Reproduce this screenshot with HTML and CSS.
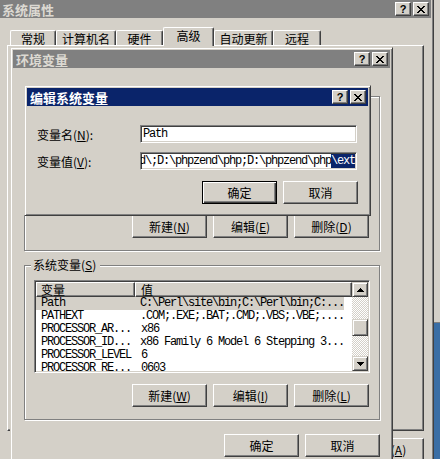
FILE: index.html
```html
<!DOCTYPE html>
<html lang="zh-CN">
<head>
    <meta charset="UTF-8">
    <meta name="viewport" content="width=device-width, initial-scale=1.0">
    <title>编辑系统变量</title>
    <link rel="stylesheet" href="styles.css">
</head>
<body>
<div class="desktop">
    <div class="desk-blue"></div>

    <!-- 系统属性 -->
    <div class="window win-sys">
        <div class="caption">
            <span>系统属性</span>
            <span class="caption-btns">
                <span class="cap-btn">?</span>
                <span class="cap-btn"><svg width="8" height="7" viewBox="0 0 8 7"><path d="M0 0h2v1H0zM6 0h2v1H6zM1 1h2v1H1zM5 1h2v1H5zM2 2h4v1H2zM3 3h2v1H3zM2 4h4v1H2zM1 5h2v1H1zM5 5h2v1H5zM0 6h2v1H0zM6 6h2v1H6z"/></svg></span>
            </span>
        </div>
        <div class="tabs">
            <span class="tab tab-general">常规</span>
            <span class="tab tab-computer">计算机名</span>
            <span class="tab tab-hardware">硬件</span>
            <span class="tab tab-advanced tab-active">高级</span>
            <span class="tab tab-update">自动更新</span>
            <span class="tab tab-remote">远程</span>
        </div>
        <div class="tab-panel"></div>
        <div class="button-row sys-buttons">
            <button type="button" class="btn">应用(<u>A</u>)</button>
        </div>
    </div>

    <!-- 环境变量 -->
    <div class="window win-env">
        <div class="caption">
            <span>环境变量</span>
            <span class="caption-btns">
                <span class="cap-btn">?</span>
                <span class="cap-btn"><svg width="8" height="7" viewBox="0 0 8 7"><path d="M0 0h2v1H0zM6 0h2v1H6zM1 1h2v1H1zM5 1h2v1H5zM2 2h4v1H2zM3 3h2v1H3zM2 4h4v1H2zM1 5h2v1H1zM5 5h2v1H5zM0 6h2v1H0zM6 6h2v1H6z"/></svg></span>
            </span>
        </div>
        <div class="env-body">
            <!-- user variables: covered by the edit dialog -->
            <div class="groupbox group-user">
                <span class="group-label group-label-empty"></span>
                <div class="listview"></div>
                <div class="button-row group-buttons">
                    <button type="button" class="btn">新建(<u>N</u>)</button>
                    <button type="button" class="btn">编辑(<u>E</u>)</button>
                    <button type="button" class="btn">删除(<u>D</u>)</button>
                </div>
            </div>

            <div class="groupbox group-system">
                <span class="group-label">系统变量(<u>S</u>)</span>
                <div class="listview">
                    <div class="lv-body">
                        <div class="lv-header">
                            <span class="lv-head lv-head-name">变量</span>
                            <span class="lv-head lv-head-value">值</span>
                        </div>
                        <div class="lv-row selected"><span class="lv-name">Path</span><span class="lv-value">C:\Perl\site\bin;C:\Perl\bin;C:...</span></div>
                        <div class="lv-row"><span class="lv-name">PATHEXT</span><span class="lv-value">.COM;.EXE;.BAT;.CMD;.VBS;.VBE;....</span></div>
                        <div class="lv-row"><span class="lv-name">PROCESSOR_AR...</span><span class="lv-value">x86</span></div>
                        <div class="lv-row"><span class="lv-name">PROCESSOR_ID...</span><span class="lv-value">x86 Family 6 Model 6 Stepping 3...</span></div>
                        <div class="lv-row"><span class="lv-name">PROCESSOR_LEVEL</span><span class="lv-value">6</span></div>
                        <div class="lv-row"><span class="lv-name">PROCESSOR_RE...</span><span class="lv-value">0603</span></div>
                    </div>
                    <div class="scrollbar">
                        <span class="sb-btn"><svg width="7" height="4" viewBox="0 0 7 4"><path d="M3 0h1v1h1v1h1v1h1v1H0V3h1V2h1V1h1z"/></svg></span>
                        <span class="sb-track"><span class="sb-thumb"></span></span>
                        <span class="sb-btn"><svg width="7" height="4" viewBox="0 0 7 4"><path d="M0 0h7v1H6v1H5v1H4v1H3V3H2V2H1V1H0z"/></svg></span>
                    </div>
                </div>
                <div class="button-row group-buttons">
                    <button type="button" class="btn">新建(<u>W</u>)</button>
                    <button type="button" class="btn">编辑(<u>I</u>)</button>
                    <button type="button" class="btn">删除(<u>L</u>)</button>
                </div>
            </div>

            <div class="button-row env-buttons">
                <button type="button" class="btn">确定</button>
                <button type="button" class="btn">取消</button>
            </div>
        </div>
    </div>

    <!-- 编辑系统变量 -->
    <div class="window win-edit">
        <div class="caption active">
            <span>编辑系统变量</span>
            <span class="caption-btns">
                <span class="cap-btn">?</span>
                <span class="cap-btn"><svg width="8" height="7" viewBox="0 0 8 7"><path d="M0 0h2v1H0zM6 0h2v1H6zM1 1h2v1H1zM5 1h2v1H5zM2 2h4v1H2zM3 3h2v1H3zM2 4h4v1H2zM1 5h2v1H1zM5 5h2v1H5zM0 6h2v1H0zM6 6h2v1H6z"/></svg></span>
            </span>
        </div>
        <div class="edit-body">
            <div class="field">
                <span class="field-label">变量名(<u>N</u>):</span>
                <span class="textbox"><span class="textbox-text">Path</span></span>
            </div>
            <div class="field">
                <span class="field-label">变量值(<u>V</u>):</span>
                <span class="textbox textbox-end"><span class="textbox-text">d\;D:\phpzend\php;D:\phpzend\php<span class="sel">\ext</span></span></span>
            </div>
            <div class="button-row edit-buttons">
                <button type="button" class="btn btn-default">确定</button>
                <button type="button" class="btn">取消</button>
            </div>
        </div>
    </div>
</div>
</body>
</html>
```

FILE: styles.css
```css
* {
    box-sizing: border-box;
}
body {
    margin: 0;
    font-family: "Noto Sans CJK SC", "Liberation Sans", sans-serif;
    font-size: 12px;
    color: #000;
    background-color: #d4d0c8;
}
.desktop {
    position: relative;
    width: 440px;
    height: 459px;
    overflow: hidden;
}
.desk-blue {
    position: absolute;
    left: 434px;
    top: 322px;
    width: 10px;
    height: 140px;
    background-color: #3a6ea5;
    border-top: 1px solid #808080;
}

/* windows */
.window {
    position: absolute;
    display: flex;
    flex-direction: column;
    padding: 2px;
    background-color: #d4d0c8;
    border: 1px solid;
    border-color: #d4d0c8 #404040 #404040 #d4d0c8;
    box-shadow: inset 1px 1px #fff, inset -1px -1px #808080;
}
.win-sys {
    left: -4px;
    top: -3px;
    width: 438px;
    height: 475px;
}
.win-env {
    left: 10px;
    top: 47px;
    width: 383px;
    height: 430px;
}
.win-edit {
    left: 24px;
    top: 85px;
    width: 347px;
    height: 131px;
}
.caption {
    display: flex;
    align-items: center;
    justify-content: space-between;
    flex-shrink: 0;
    height: 18px;
    padding: 0 2px 0 3px;
    font-size: 13px;
    font-weight: bold;
    color: #dcd9d2;
    background-color: #808080;
}
.caption.active {
    color: #fff;
    background-color: #0a246a;
}
.caption-btns {
    display: flex;
    gap: 2px;
}
.cap-btn {
    display: flex;
    align-items: center;
    justify-content: center;
    width: 16px;
    height: 14px;
    font-family: "Liberation Sans", sans-serif;
    font-size: 11px;
    font-weight: bold;
    line-height: 1;
    color: #000;
    background-color: #d4d0c8;
    border: 1px solid;
    border-color: #fff #404040 #404040 #fff;
    box-shadow: inset -1px -1px #808080;
}
.cap-btn svg {
    display: block;
}

/* tabs */
.tabs {
    display: flex;
    align-items: flex-end;
    height: 19px;
    margin-top: 9px;
    padding-left: 11px;
}
.tab {
    display: flex;
    align-items: center;
    justify-content: center;
    height: 16px;
    border-top: 1px solid #fff;
    border-left: 1px solid #fff;
    border-right: 1px solid #404040;
    border-radius: 2px 2px 0 0;
    box-shadow: inset -1px 0 #808080;
}
.tab-general { width: 46px; }
.tab-computer { width: 60px; }
.tab-hardware { width: 47px; }
.tab-advanced { width: 51px; }
.tab-update { width: 59px; }
.tab-remote { width: 48px; }
.tab-active {
    position: relative;
    z-index: 1;
    height: 19px;
    padding-bottom: 3px;
    background-color: #d4d0c8;
}
.tab-panel {
    height: 386px;
    margin: -1px 7px 0 8px;
    border: 1px solid;
    border-color: #fff #404040 #404040 #fff;
    box-shadow: inset -1px -1px #808080;
}

/* buttons */
.button-row {
    display: flex;
    justify-content: flex-end;
    gap: 6px;
}
.btn {
    width: 75px;
    height: 23px;
    padding: 0;
    font-family: inherit;
    font-size: 12px;
    color: #000;
    background-color: #d4d0c8;
    border: 1px solid;
    border-color: #fff #404040 #404040 #fff;
    box-shadow: inset -1px -1px #808080;
}
.btn-default {
    border-color: #000;
    box-shadow: inset 1px 1px #fff, inset -1px -1px #404040, inset -2px -2px #808080;
}
.sys-buttons {
    margin-top: 7px;
    padding-right: 7px;
}

/* 环境变量 */
.env-body {
    display: flex;
    flex-direction: column;
    padding: 0 10px 0 11px;
}
.groupbox {
    display: flex;
    flex-direction: column;
    padding: 0 9px 12px 9px;
    border: 1px solid #808080;
    box-shadow: inset 1px 1px #fff, 1px 1px #fff;
}
.group-user {
    margin-top: 28px;
}
.group-system {
    margin-top: 14px;
}
.group-label {
    align-self: flex-start;
    margin: -8px 0 0 -3px;
    padding: 0 4px 0 2px;
    line-height: 14px;
    background-color: #d4d0c8;
}
.group-label-empty {
    height: 14px;
}
.group-buttons {
    margin-top: 11px;
    padding-right: 1px;
}
.env-buttons {
    margin-top: 14px;
}

/* list view */
.listview {
    display: flex;
    height: 93px;
    margin-top: 8px;
    padding: 1px;
    overflow: hidden;
    background-color: #fff;
    border: 1px solid;
    border-color: #808080 #fff #fff #808080;
    box-shadow: inset 1px 1px #404040, inset -1px -1px #d4d0c8;
}
.lv-body {
    flex: 1;
    overflow: hidden;
}
.lv-header {
    display: flex;
    height: 15px;
}
.lv-head {
    line-height: 13px;
    background-color: #d4d0c8;
    border: 1px solid;
    border-color: #fff #404040 #404040 #fff;
    box-shadow: inset -1px -1px #808080;
}
.lv-head-name {
    width: 99px;
    padding-left: 4px;
}
.lv-head-value {
    flex: 1;
    padding-left: 5px;
}
.lv-row {
    display: flex;
    width: 308px;
    height: 13px;
    line-height: 13px;
    font-family: "Liberation Mono", monospace;
    font-size: 12px;
    letter-spacing: -1.2px;
    white-space: nowrap;
}
.lv-row.selected {
    background-color: #d4d0c8;
}
.lv-name {
    width: 99px;
    padding-left: 5px;
    overflow: hidden;
}
.lv-value {
    flex: 1;
    padding-left: 6px;
}
.scrollbar {
    display: flex;
    flex-direction: column;
    width: 16px;
}
.sb-btn {
    display: flex;
    align-items: center;
    justify-content: center;
    flex-shrink: 0;
    height: 15px;
    background-color: #d4d0c8;
    border: 1px solid;
    border-color: #d4d0c8 #404040 #404040 #d4d0c8;
    box-shadow: inset 1px 1px #fff, inset -1px -1px #808080;
}
.sb-btn svg {
    display: block;
}
.sb-track {
    flex: 1;
    background-color: #d4d0c8;
    background-image: conic-gradient(#fff 25%, #d4d0c8 0 50%, #fff 0 75%, #d4d0c8 0);
    background-size: 2px 2px;
}
.sb-thumb {
    display: block;
    height: 17px;
    margin-top: 22px;
    background-color: #d4d0c8;
    border: 1px solid;
    border-color: #d4d0c8 #404040 #404040 #d4d0c8;
    box-shadow: inset 1px 1px #fff, inset -1px -1px #808080;
}

/* 编辑系统变量 */
.edit-body {
    display: flex;
    flex-direction: column;
    padding: 0 10px;
}
.field {
    display: flex;
    align-items: center;
    margin-top: 9px;
}
.field:first-child {
    margin-top: 19px;
}
.field-label {
    width: 103px;
}
.textbox {
    display: flex;
    align-items: center;
    width: 217px;
    height: 18px;
    padding: 0 1px 0 2px;
    overflow: hidden;
    white-space: nowrap;
    font-family: "Liberation Mono", monospace;
    font-size: 12px;
    letter-spacing: -1.2px;
    background-color: #fff;
    border: 1px solid;
    border-color: #808080 #fff #fff #808080;
    box-shadow: inset 1px 1px #404040, inset -1px -1px #d4d0c8;
}
.textbox-end {
    justify-content: flex-end;
}
.textbox-text {
    flex-shrink: 0;
    line-height: 14px;
}
.sel {
    color: #fff;
    background-color: #0a246a;
}
.edit-buttons {
    margin-top: 11px;
}
```
